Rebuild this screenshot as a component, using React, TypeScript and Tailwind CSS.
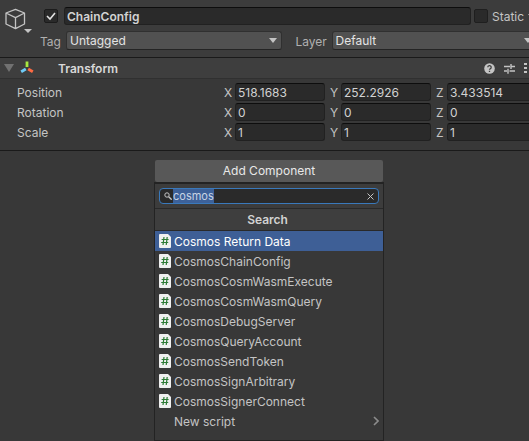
import { useState } from "react";

const scripts = [
  "Cosmos Return Data",
  "CosmosChainConfig",
  "CosmosCosmWasmExecute",
  "CosmosCosmWasmQuery",
  "CosmosDebugServer",
  "CosmosQueryAccount",
  "CosmosSendToken",
  "CosmosSignArbitrary",
  "CosmosSignerConnect",
];

const transform = [
  { name: "Position", values: ["518.1683", "252.2926", "3.433514"] },
  { name: "Rotation", values: ["0", "0", "0"] },
  { name: "Scale", values: ["1", "1", "1"] },
];

const axes = ["X", "Y", "Z"];

const field =
  "h-[18px] min-w-0 rounded-[3px] border border-[#212121] border-t-[#0d0d0d] bg-[#2a2a2a] px-[2px] pt-[2px] text-[#d2d2d2] outline-none";

function CubeIcon() {
  return (
    <svg width="28" height="28" viewBox="0 0 28 28" fill="none" aria-hidden="true">
      <path
        d="M10.5 2.3 19.5 6V17L10.5 21.7 1 17V6ZM1 6l9.5 4.6L19.5 6M10.5 10.6V21.7"
        stroke="#c4c4c4"
        strokeWidth="1.3"
        strokeLinejoin="round"
      />
      <path d="M19 22h8l-4 4Z" fill="#c4c4c4" />
    </svg>
  );
}

function TransformIcon() {
  return (
    <svg width="14" height="14" viewBox="0 0 14 14" strokeWidth="2.8" aria-hidden="true">
      <path d="M7 .5V6" stroke="#a7e83f" />
      <path d="M5.8 8 1.2 10.8" stroke="#6fcbf7" />
      <path d="m8.2 8 4.6 2.8" stroke="#ff6b43" />
    </svg>
  );
}

function ScriptIcon() {
  return (
    <svg width="12" height="14" viewBox="0 0 12 14" className="shrink-0" aria-hidden="true">
      <path d="M1 0h8l3 3v10a1 1 0 0 1-1 1H1a1 1 0 0 1-1-1V1a1 1 0 0 1 1-1Z" fill="#f0f0f0" />
      <path d="M5 3 4 11M8.2 3l-1 8M2.6 5.5h7M2.2 8.5h7" stroke="#2c7a35" strokeWidth="1.2" />
    </svg>
  );
}

function Dropdown({ id, value }: { id: string; value: string }) {
  return (
    <div className="relative flex-1">
      <select
        id={id}
        className="block h-[19px] w-full appearance-none rounded-[3px] border border-[#303030] border-b-[#242424] bg-[#515151] px-[3px] text-[#e4e4e4] outline-none"
      >
        <option>{value}</option>
      </select>
      <svg width="8" height="5" viewBox="0 0 8 5" className="pointer-events-none absolute top-[7px] right-[5px]" aria-hidden="true">
        <path d="M0 0h8L4 5Z" fill="#c4c4c4" />
      </svg>
    </div>
  );
}

function ObjectHeader() {
  return (
    <header className="flex h-[57px] bg-[#3c3c3c] pt-[7px] pl-[5px]">
      <div className="w-[35px] shrink-0">
        <CubeIcon />
      </div>
      <div className="min-w-0 flex-1">
        <div className="flex items-center">
          <label className="relative ml-1 flex">
            <input
              type="checkbox"
              defaultChecked
              aria-label="Active"
              className="peer size-[14px] appearance-none rounded-[2px] border border-[#1c1c1c] bg-[#2a2a2a]"
            />
            <svg width="14" height="14" viewBox="0 0 14 14" fill="none" className="absolute hidden peer-checked:block" aria-hidden="true">
              <path d="m3 7 3 3 5-6" stroke="#e2e2e2" strokeWidth="1.6" />
            </svg>
          </label>
          <input aria-label="Name" defaultValue="ChainConfig" className={`${field} ml-[6px] flex-1 font-semibold`} />
          <label className="ml-[3px] flex w-[67px] shrink-0 items-center gap-1">
            <input
              type="checkbox"
              className="size-[14px] shrink-0 appearance-none rounded-[2px] border border-[#1f1f1f] bg-[#2a2a2a] checked:bg-[#cccccc]"
            />
            <span className="pt-[2px] leading-4">Static</span>
            <svg width="8" height="5" viewBox="0 0 8 5" className="shrink-0" aria-hidden="true">
              <path d="M0 0h8L4 5Z" fill="#c4c4c4" />
            </svg>
          </label>
        </div>
        <div className="mt-[6px] grid grid-cols-2 gap-[14px] pr-1">
          <div className="flex items-center">
            <label htmlFor="tag" className="w-[26px] shrink-0 pt-[2px] leading-4 text-[#b0b0b0]">
              Tag
            </label>
            <Dropdown id="tag" value="Untagged" />
          </div>
          <div className="flex items-center">
            <label htmlFor="layer" className="w-9 shrink-0 pt-[2px] leading-4 text-[#b0b0b0]">
              Layer
            </label>
            <Dropdown id="layer" value="Default" />
          </div>
        </div>
      </div>
    </header>
  );
}

function TransformPanel() {
  return (
    <section className="border-y border-[#1a1a1a]">
      <div className="flex h-[21px] items-center border-b border-[#303030] bg-[#3e3e3e] pr-[6px] pl-1">
        <button aria-label="Collapse" className="mr-[6px]">
          <svg width="10" height="8" viewBox="0 0 10 8">
            <path d="M0 0h10L5 8Z" fill="#717171" />
          </svg>
        </button>
        <TransformIcon />
        <h2 className="ml-6 flex-1 pt-[2px] leading-4 font-semibold text-[#d8d8d8]">Transform</h2>
        <div className="flex items-center gap-[9px]">
          <button aria-label="Help">
            <svg width="11" height="11" viewBox="0 0 11 11" fill="none">
              <circle cx="5.5" cy="5.5" r="5.3" fill="#c4c4c4" />
              <path d="M3.8 4.3a1.7 1.7 0 1 1 2.4 1.5c-.5.3-.7.5-.7 1M5.5 7.8v1.3" stroke="#3e3e3e" strokeWidth="1.3" />
            </svg>
          </button>
          <button aria-label="Presets">
            <svg width="11" height="11" viewBox="0 0 11 11" fill="none" stroke="#c4c4c4" strokeWidth="1.4">
              <path d="M0 3.5h6M7 1v5M7 3.5h4M0 8h3M4 5.7v5M5.5 8H11" />
            </svg>
          </button>
          <button aria-label="More" className="w-[11px]">
            <svg width="3" height="11" viewBox="0 0 3 11" fill="#c4c4c4">
              <path d="M0 0h3v2H0ZM0 4h3v2H0ZM0 8h3v2H0Z" />
            </svg>
          </button>
        </div>
      </div>
      <div className="flex flex-col gap-[2px] pt-1 pr-1 pb-[9px] pl-[17px]">
        {transform.map((row) => (
          <div key={row.name} className="flex items-center">
            <span className="w-[207px] shrink-0 pt-[2px] leading-4">{row.name}</span>
            <div className="grid flex-1 grid-cols-3 gap-[5px]">
              {axes.map((axis, i) => (
                <label key={axis} className="flex items-center">
                  <span className="w-[11px] shrink-0 pt-[2px] leading-4">{axis}</span>
                  <input
                    aria-label={`${row.name} ${axis}`}
                    defaultValue={row.values[i]}
                    className={`${field} w-full flex-1`}
                  />
                </label>
              ))}
            </div>
          </div>
        ))}
      </div>
    </section>
  );
}

function ComponentPicker() {
  const [query, setQuery] = useState("cosmos");
  return (
    <div className="mx-auto flex w-[230px] flex-1 flex-col pt-[9px]">
      <button className="mx-px h-[22px] rounded-[2px] bg-[#585858] text-[#e8e8e8]">Add Component</button>
      <div className="flex-1 border-x border-t-2 border-b border-[#232323] bg-[#383838]">
        <div className="bg-[#3c3c3c] p-1">
          <div className="flex h-4 items-center rounded-[4px] border border-[#3a79bb] bg-[#2a2a2a] px-1">
            <svg width="8" height="8" viewBox="0 0 8 8" fill="none" stroke="#c4c4c4" className="mr-px shrink-0" aria-hidden="true">
              <circle cx="3" cy="3" r="2.2" />
              <path d="m4.7 4.7 3 3" strokeWidth="1.4" />
            </svg>
            <div className="flex min-w-0 flex-1">
              <input
                aria-label="Search components"
                value={query}
                onChange={(e) => setQuery(e.target.value)}
                className="field-sizing-content h-[14px] max-w-full bg-[#3d6199] text-[11px] leading-[14px] text-[#c8d4e4] outline-none"
              />
            </div>
            <button aria-label="Clear" onClick={() => setQuery("")}>
              <svg width="7" height="7" viewBox="0 0 7 7" stroke="#c4c4c4">
                <path d="m.5.5 6 6m0-6-6 6" />
              </svg>
            </button>
          </div>
        </div>
        <h3 className="h-[23px] border-y border-[#292929] bg-[#3e3e3e] pr-[3px] text-center leading-[21px] font-semibold text-[#d2d2d2]">
          Search
        </h3>
        <ul>
          {scripts.map((name, i) => (
            <li key={name}>
              <button
                className={`flex h-5 w-full items-center gap-[3px] px-1 text-left ${i === 0 ? "bg-[#3e5f96] text-white" : ""}`}
              >
                <ScriptIcon />
                <span className="pt-[2px]">{name}</span>
              </button>
            </li>
          ))}
          <li>
            <button className="flex h-5 w-full items-center justify-between pr-1 pl-[19px]">
              <span className="pt-[2px]">New script</span>
              <svg width="6" height="10" viewBox="0 0 6 10" fill="none" stroke="#8c8c8c" strokeWidth="1.6" aria-hidden="true">
                <path d="m1 1 4 4-4 4" />
              </svg>
            </button>
          </li>
        </ul>
      </div>
    </div>
  );
}

export default function App() {
  return (
    <div className="flex min-h-screen flex-col overflow-hidden bg-[#383838] font-['Inter',sans-serif] text-xs leading-[18px] text-[#c4c4c4]">
      <div className="-mr-3">
        <ObjectHeader />
        <TransformPanel />
      </div>
      <div className="flex flex-1 flex-col pl-[9px]">
        <ComponentPicker />
      </div>
    </div>
  );
}
